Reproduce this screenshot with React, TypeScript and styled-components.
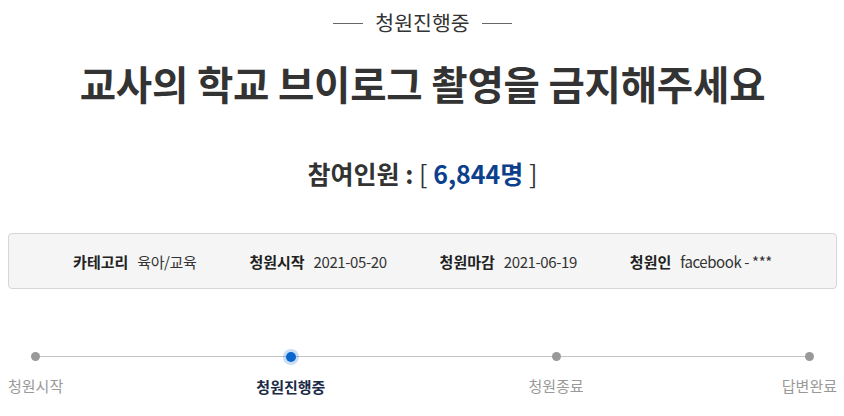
import React from 'react';
import styled, { createGlobalStyle } from 'styled-components';

const GlobalStyle = createGlobalStyle`
  html, body {
    margin: 0;
    padding: 0;
    background: #fff;
  }
  body {
    font-family: 'Noto Sans CJK KR', 'Noto Sans', sans-serif;
    color: #333;
  }
`;

const INFO = [
  { label: '카테고리', value: '육아/교육' },
  { label: '청원시작', value: '2021-05-20' },
  { label: '청원마감', value: '2021-06-19' },
  { label: '청원인', value: 'facebook - ***' },
];

const STEPS = ['청원시작', '청원진행중', '청원종료', '답변완료'];
const ACTIVE_STEP = 1;

const App: React.FC = () => {
  return (
    <StyledPage>
      <GlobalStyle />
      <StyledStatus>청원진행중</StyledStatus>
      <StyledTitle>교사의 학교 브이로그 촬영을 금지해주세요</StyledTitle>
      <StyledCount>
        참여인원 : <StyledBracket>[</StyledBracket> <span className="num">6,844명</span>{' '}
        <StyledBracket>]</StyledBracket>
      </StyledCount>
      <StyledInfoBox>
        {INFO.map((item) => (
          <StyledInfoItem key={item.label}>
            <strong>{item.label}</strong>
            <span>{item.value}</span>
          </StyledInfoItem>
        ))}
      </StyledInfoBox>
      <StyledSteps>
        {STEPS.map((step, i) => (
          <StyledStep key={step} $active={i === ACTIVE_STEP}>
            <StyledDot $active={i === ACTIVE_STEP} />
            <StyledStepLabel $active={i === ACTIVE_STEP}>{step}</StyledStepLabel>
          </StyledStep>
        ))}
      </StyledSteps>
    </StyledPage>
  );
};

const StyledPage = styled.div`
  width: 844px;
  height: 416px;
  box-sizing: border-box;
  padding: 8px 7px 0 8px;
  overflow: hidden;
`;

const StyledStatus = styled.div`
  display: flex;
  align-items: center;
  justify-content: center;
  gap: 12px;
  font-size: 20.5px;
  line-height: 28px;
  color: #333;
  &::before,
  &::after {
    content: '';
    width: 30px;
    height: 1px;
    background: #666;
    margin-top: 2px;
  }
`;

const StyledTitle = styled.h1`
  margin: 19px 0 0;
  text-align: center;
  font-size: 39.5px;
  line-height: 56px;
  font-weight: 700;
  color: #333;
  letter-spacing: -0.2px;
`;

const StyledCount = styled.div`
  margin-top: 44px;
  text-align: center;
  font-size: 25px;
  line-height: 36px;
  font-weight: 700;
  color: #333;
  .num {
    color: #0c3f8c;
  }
`;

const StyledBracket = styled.span`
  font-weight: 400;
`;

const StyledInfoBox = styled.div`
  margin-top: 42px;
  height: 56px;
  box-sizing: border-box;
  display: flex;
  align-items: center;
  justify-content: center;
  gap: 53px;
  background: #f5f5f5;
  border: 1px solid #d6d6d6;
  border-radius: 4px;
  font-size: 15px;
`;

const StyledInfoItem = styled.div`
  display: flex;
  align-items: center;
  gap: 9px;
  strong {
    font-weight: 700;
    color: #222;
  }
  span {
    color: #333;
    letter-spacing: -0.4px;
  }
`;

const StyledSteps = styled.div`
  position: relative;
  margin-top: 59px;
  display: flex;
  justify-content: space-between;
  &::before {
    content: '';
    position: absolute;
    left: 26px;
    right: 27px;
    top: 8px;
    height: 1px;
    background: #c4c4c4;
  }
`;

const StyledStep = styled.div<{ $active: boolean }>`
  position: relative;
  display: flex;
  flex-direction: column;
  align-items: center;
  gap: 15px;
  margin: ${(p) => (p.$active ? '0 5px 0 -5px' : '0')};
`;

const StyledDot = styled.span<{ $active: boolean }>`
  width: ${(p) => (p.$active ? '10px' : '9px')};
  height: ${(p) => (p.$active ? '10px' : '9px')};
  margin-top: 4px;
  border-radius: 50%;
  background: ${(p) => (p.$active ? '#0a66cc' : '#999')};
  box-shadow: ${(p) => (p.$active ? '0 0 0 3px rgba(10, 102, 204, 0.22)' : 'none')};
`;

const StyledStepLabel = styled.span<{ $active: boolean }>`
  font-size: 15px;
  line-height: 20px;
  font-weight: ${(p) => (p.$active ? 700 : 400)};
  color: ${(p) => (p.$active ? '#1b2a47' : '#999')};
`;

export default App;
